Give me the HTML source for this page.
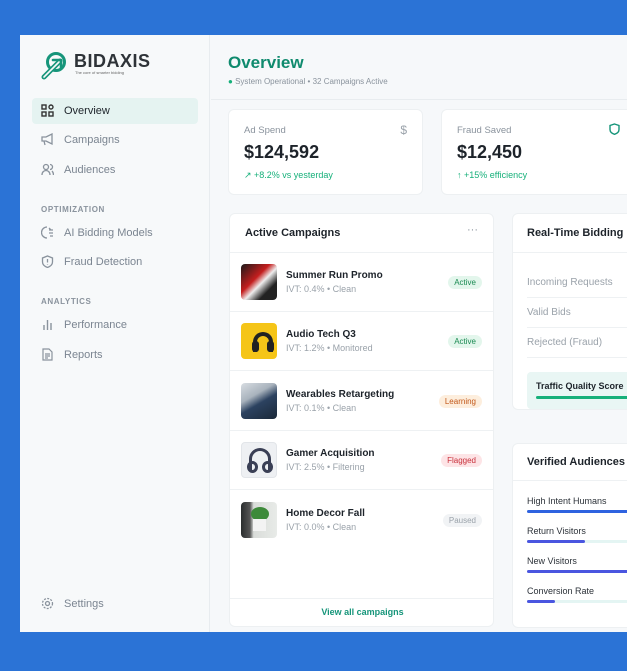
<!DOCTYPE html>
<html><head><meta charset="utf-8"><style>
*{margin:0;padding:0;box-sizing:border-box}
body{width:627px;height:671px;background:#2b73d6;font-family:"Liberation Sans",sans-serif;position:relative;overflow:hidden}
.a{position:absolute}
.win{left:20px;top:35px;width:620px;height:597px;background:#f6f8fa;overflow:hidden}
.side{left:0;top:0;width:190px;height:597px;background:#f7f9fa;border-right:1px solid #e8ecef}
.nav{position:absolute;left:12px;width:166px;height:26px;font-size:11px;color:#7b8591;line-height:26px;padding-left:32px}
.nav svg{position:absolute;left:9px;top:6px}
.sec{position:absolute;left:21px;font-size:8px;font-weight:bold;color:#8a939d;letter-spacing:.6px}
.card{position:absolute;background:#fff;border:1px solid #edf0f2;border-radius:6px}
.row{position:absolute;left:0;width:264px;height:59px;border-bottom:1px solid #eef1f3}
.img{position:absolute;left:11px;top:11px;width:36px;height:36px;border-radius:4px;overflow:hidden}
.t{position:absolute;left:56px;top:17px;font-size:10px;font-weight:bold;color:#1d232a}
.s{position:absolute;left:56px;top:31px;font-size:9px;color:#9aa2aa}
.b{position:absolute;right:12px;top:23px;font-size:8px;padding:2px 6px;border-radius:8px}
.rl{position:absolute;left:14px;font-size:10px;color:#9aa2aa}
.hr{position:absolute;left:14px;width:110px;height:1px;background:#eef1f3}
.al{position:absolute;left:14px;font-size:9px;color:#2b3138}
.bar{position:absolute;left:14px;height:3px;border-radius:2px}
</style></head><body>
<div class="a win">
 <div class="a side">
  <svg class="a" style="left:19px;top:16px" width="30" height="30" viewBox="0 0 30 30"><circle cx="17" cy="11" r="8.5" fill="none" stroke="#16957a" stroke-width="3"/><path d="M5 26 L21 10" stroke="#16957a" stroke-width="5" stroke-linecap="round"/><path d="M5 26 L21 10" stroke="#f7f9fa" stroke-width="1.6" stroke-linecap="round"/><path d="M14 9 L22 9 L22 17" stroke="#16957a" stroke-width="2.6" fill="none" stroke-linecap="round" stroke-linejoin="round"/></svg>
  <div class="a" style="left:54px;top:16px;font-size:18px;font-weight:bold;color:#2e3338;letter-spacing:.5px">BIDAXIS</div>
  <div class="a" style="left:55px;top:35px;font-size:4px;color:#666">The core of smarter bidding</div>
  <div class="nav" style="top:63px;background:#e5f3f1;color:#1d232a;border-radius:4px"><svg width="13" height="13" viewBox="0 0 13 13" fill="none" stroke="#333" stroke-width="1.4"><rect x="1" y="1" width="4" height="4"/><circle cx="10" cy="3" r="2"/><rect x="1" y="8" width="4" height="4"/><rect x="8" y="8" width="4" height="4"/></svg>Overview</div>
  <div class="nav" style="top:92px"><svg width="13" height="13" viewBox="0 0 13 13" fill="none" stroke="#8a939d" stroke-width="1.3"><path d="M1 4h4l6-3v10l-6-3H1zM3 8l1 4"/></svg>Campaigns</div>
  <div class="nav" style="top:122px"><svg width="13" height="13" viewBox="0 0 13 13" fill="none" stroke="#8a939d" stroke-width="1.3"><circle cx="5" cy="4" r="2.5"/><path d="M1 12c0-3 2-4.5 4-4.5s4 1.5 4 4.5M9 1.5a2.5 2.5 0 010 5M11 8c1 1 1.5 2 1.5 4"/></svg>Audiences</div>
  <div class="sec" style="top:170px">OPTIMIZATION</div>
  <div class="nav" style="top:185px"><svg width="13" height="13" viewBox="0 0 13 13" fill="none" stroke="#8a939d" stroke-width="1.3"><path d="M6 1a5 5 0 100 11M8 4h4M8 7h4M9 10h3M8 2l2 2"/></svg>AI Bidding Models</div>
  <div class="nav" style="top:214px"><svg width="13" height="13" viewBox="0 0 13 13" fill="none" stroke="#8a939d" stroke-width="1.3"><path d="M6.5 1L11.5 3v4c0 3-2.5 4.5-5 5.5C4 11.5 1.5 10 1.5 7V3z M6.5 4v3.5M6.5 9v.5"/></svg>Fraud Detection</div>
  <div class="sec" style="top:262px">ANALYTICS</div>
  <div class="nav" style="top:277px"><svg width="13" height="13" viewBox="0 0 13 13" fill="none" stroke="#8a939d" stroke-width="1.4"><path d="M3 12V7M6.5 12V2M10 12V5"/></svg>Performance</div>
  <div class="nav" style="top:307px"><svg width="13" height="13" viewBox="0 0 13 13" fill="none" stroke="#8a939d" stroke-width="1.2"><path d="M2 1h6l3 3v8H2zM4 6h5M4 8h5M4 10h3"/></svg>Reports</div>
  <div class="nav" style="top:556px"><svg width="13" height="13" viewBox="0 0 13 13" fill="none" stroke="#8a939d" stroke-width="1.3"><circle cx="6.5" cy="6.5" r="2"/><circle cx="6.5" cy="6.5" r="5" stroke-dasharray="2 1.3"/></svg>Settings</div>
 </div>
 <div class="a" style="left:191px;top:0;width:429px;height:65px;border-bottom:1px solid #e8ecef"></div>
 <div class="a" style="left:208px;top:18px;font-size:17px;font-weight:bold;color:#0f8a6e">Overview</div>
 <div class="a" style="left:208px;top:42px;font-size:8px;color:#8a939d"><span style="color:#16b07a">●</span> System Operational • 32 Campaigns Active</div>

 <div class="card" style="left:208px;top:74px;width:195px;height:86px">
  <div class="a" style="left:15px;top:15px;font-size:9.5px;color:#8a939d">Ad Spend</div>
  <div class="a" style="right:15px;top:13px;font-size:12px;color:#9aa2aa">$</div>
  <div class="a" style="left:15px;top:32px;font-size:18px;font-weight:bold;color:#1d232a">$124,592</div>
  <div class="a" style="left:15px;top:60px;font-size:9px;color:#16b07a">↗ +8.2% vs yesterday</div>
 </div>
 <div class="card" style="left:421px;top:74px;width:210px;height:86px">
  <div class="a" style="left:15px;top:15px;font-size:9.5px;color:#8a939d">Fraud Saved</div>
  <svg class="a" style="left:167px;top:13px" width="11" height="12" viewBox="0 0 11 12" fill="none" stroke="#16957a" stroke-width="1.4"><path d="M5.5 1L10 2.5v4c0 2.5-2 4-4.5 4.8C3 10.5 1 9 1 6.5v-4z"/></svg>
  <div class="a" style="left:15px;top:32px;font-size:18px;font-weight:bold;color:#1d232a">$12,450</div>
  <div class="a" style="left:15px;top:60px;font-size:9px;color:#16b07a">↑ +15% efficiency</div>
 </div>

 <div class="card" style="left:209px;top:178px;width:265px;height:414px;overflow:hidden">
  <div class="a" style="left:15px;top:13px;font-size:11px;font-weight:bold;color:#1d232a">Active Campaigns</div>
  <div class="a" style="right:15px;top:10px;font-size:11px;color:#8a939d">···</div>
  <div class="a" style="left:0;top:38px;width:265px;height:1px;background:#eef1f3"></div>
  <div class="row" style="top:39px"><div class="img" style="background:linear-gradient(135deg,#1a1a1a 0,#c41e1e 40%,#eee 55%,#222 75%)"></div><div class="t">Summer Run Promo</div><div class="s">IVT: 0.4% • Clean</div><div class="b" style="background:#e3f6ec;color:#1a8a52">Active</div></div>
  <div class="row" style="top:98px"><div class="img" style="background:#f5c518"><div class="a" style="left:12px;top:9px;width:20px;height:20px;border:4px solid #222;border-bottom:none;border-radius:10px 10px 0 0"></div><div class="a" style="left:11px;top:18px;width:7px;height:11px;background:#222;border-radius:3px"></div><div class="a" style="left:26px;top:18px;width:7px;height:11px;background:#222;border-radius:3px"></div></div><div class="t">Audio Tech Q3</div><div class="s">IVT: 1.2% • Monitored</div><div class="b" style="background:#e3f6ec;color:#1a8a52">Active</div></div>
  <div class="row" style="top:158px"><div class="img" style="background:linear-gradient(150deg,#d8dde2 0,#a9b3bd 35%,#2c4260 55%,#1a2838 100%)"></div><div class="t">Wearables Retargeting</div><div class="s">IVT: 0.1% • Clean</div><div class="b" style="background:#fdeedd;color:#c2581a">Learning</div></div>
  <div class="row" style="top:217px"><div class="img" style="background:#eef0f3;border:1px solid #e2e5e9"><div class="a" style="left:7px;top:5px;width:22px;height:22px;border:3px solid #3a3f55;border-bottom:none;border-radius:11px 11px 0 0"></div><div class="a" style="left:5px;top:18px;width:11px;height:12px;border:3px solid #3a3f55;border-radius:50%"></div><div class="a" style="left:20px;top:18px;width:11px;height:12px;border:3px solid #3a3f55;border-radius:50%"></div></div><div class="t">Gamer Acquisition</div><div class="s">IVT: 2.5% • Filtering</div><div class="b" style="background:#fde4e6;color:#c8303b">Flagged</div></div>
  <div class="row" style="top:277px;border:none"><div class="img" style="background:linear-gradient(90deg,#2a2d2e 0,#555 25%,#d9dcd9 35%,#e8ebe8 100%)"><div class="a" style="left:10px;top:5px;width:18px;height:14px;background:#3d8a3a;border-radius:50%"></div><div class="a" style="left:12px;top:17px;width:13px;height:12px;background:#f3f3f3"></div></div><div class="t">Home Decor Fall</div><div class="s">IVT: 0.0% • Clean</div><div class="b" style="background:#f1f3f5;color:#9aa2aa">Paused</div></div>
  <div class="a" style="left:0;top:384px;width:265px;height:1px;background:#eef1f3"></div>
  <div class="a" style="left:0;top:393px;width:265px;text-align:center;font-size:9px;font-weight:bold;color:#16957a">View all campaigns</div>
 </div>

 <div class="card" style="left:492px;top:178px;width:140px;height:197px">
  <div class="a" style="left:14px;top:13px;font-size:11px;font-weight:bold;color:#1d232a;white-space:nowrap">Real-Time Bidding</div>
  <div class="a" style="left:0;top:38px;width:140px;height:1px;background:#eef1f3"></div>
  <div class="rl" style="top:63px">Incoming Requests</div><div class="hr" style="top:83px"></div>
  <div class="rl" style="top:93px">Valid Bids</div><div class="hr" style="top:113px"></div>
  <div class="rl" style="top:123px">Rejected (Fraud)</div><div class="hr" style="top:143px"></div>
  <div class="a" style="left:14px;top:158px;width:120px;height:37px;background:#e9f6f4;border-radius:4px"><div class="a" style="left:9px;top:9px;font-size:9px;font-weight:bold;color:#1d232a;white-space:nowrap">Traffic Quality Score</div><div class="a" style="left:9px;top:24px;width:110px;height:3px;background:#16b07a;border-radius:2px"></div></div>
 </div>

 <div class="card" style="left:492px;top:408px;width:140px;height:185px">
  <div class="a" style="left:14px;top:12px;font-size:11px;font-weight:bold;color:#1d232a;white-space:nowrap">Verified Audiences</div>
  <div class="a" style="left:0;top:36px;width:140px;height:1px;background:#eef1f3"></div>
  <div class="al" style="top:52px">High Intent Humans</div><div class="bar" style="top:66px;width:120px;background:#2f63e0"></div>
  <div class="al" style="top:82px">Return Visitors</div><div class="bar" style="top:96px;width:120px;background:#e4f5f3"></div><div class="bar" style="top:96px;width:58px;background:#4a56e0"></div>
  <div class="al" style="top:112px">New Visitors</div><div class="bar" style="top:126px;width:120px;background:#4a56e0"></div>
  <div class="al" style="top:142px">Conversion Rate</div><div class="bar" style="top:156px;width:120px;background:#e4f5f3"></div><div class="bar" style="top:156px;width:28px;background:#4a56e0"></div>
 </div>
</div>
</body></html>
